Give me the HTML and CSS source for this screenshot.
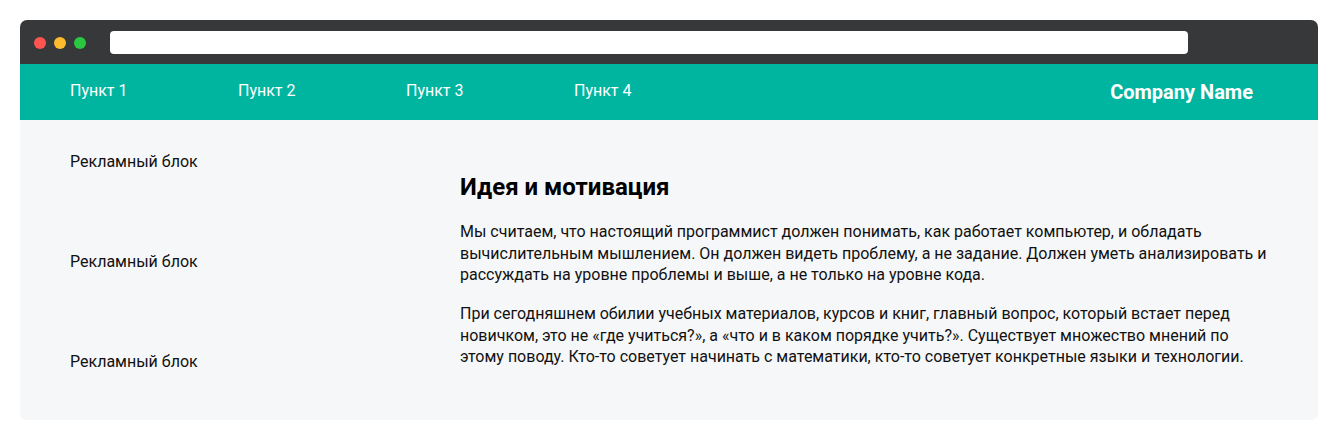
FILE: index.html
```html
<!DOCTYPE html>
<html lang="ru">
<head>
<meta charset="utf-8">
<title>Идея и мотивация</title>
<link rel="stylesheet" href="styles.css">
</head>
<body>
<div class="window">
  <div class="titlebar">
    <div class="dots">
      <span class="dot dot-red"></span>
      <span class="dot dot-yellow"></span>
      <span class="dot dot-green"></span>
    </div>
    <div class="urlbar"></div>
  </div>
  <header class="nav">
    <ul class="menu">
      <li>Пункт 1</li>
      <li>Пункт 2</li>
      <li>Пункт 3</li>
      <li>Пункт 4</li>
    </ul>
    <div class="brand">Company Name</div>
  </header>
  <main class="content">
    <aside class="ads">
      <div class="ad">Рекламный блок</div>
      <div class="ad">Рекламный блок</div>
      <div class="ad">Рекламный блок</div>
    </aside>
    <article class="article">
      <h1 class="title">Идея и мотивация</h1>
      <p class="text">Мы считаем, что настоящий программист должен понимать, как работает компьютер, и обладать вычислительным мышлением. Он должен видеть проблему, а не задание. Должен уметь анализировать и рассуждать на уровне проблемы и выше, а не только на уровне кода.</p>
      <p class="text">При сегодняшнем обилии учебных материалов, курсов и книг, главный вопрос, который встает перед новичком, это не «где учиться?», а «что и в каком порядке учить?». Существует множество мнений по этому поводу. Кто-то советует начинать с математики, кто-то советует конкретные языки и технологии.</p>
    </article>
  </main>
</div>
</body>
</html>
```

FILE: styles.css
```css
* { box-sizing: border-box; }
html, body { margin: 0; padding: 0; background: #ffffff; }
body {
  padding: 20px;
  font-family: Roboto, "Liberation Sans", sans-serif;
}
.window {
  width: 1298px;
  border-radius: 7px;
  overflow: hidden;
  background: #f6f7f9;
}
.titlebar {
  height: 44px;
  background: #37383a;
  display: flex;
  align-items: center;
  padding: 0 0 0 14px;
}
.dots {
  display: flex;
  gap: 8px;
  margin-top: 1px;
}
.dot {
  width: 12px;
  height: 12px;
  border-radius: 50%;
  display: block;
}
.dot-red { background: #fe5551; }
.dot-yellow { background: #fdbb2e; }
.dot-green { background: #29c840; }
.urlbar {
  margin-left: 24px;
  width: 1078px;
  height: 23px;
  background: #ffffff;
  border-radius: 4px;
  margin-top: 1px;
}
.nav {
  height: 56px;
  background: #00b5a0;
  display: flex;
  align-items: center;
  justify-content: space-between;
  padding: 0 65px 0 50px;
  color: #ffffff;
}
.menu {
  list-style: none;
  margin: 0;
  padding: 0;
  display: flex;
  margin-top: -3px;
}
.menu li {
  width: 168px;
  font-size: 16px;
  line-height: 20px;
}
.brand {
  font-size: 20px;
  line-height: 24px;
  font-weight: 700;
}
.content {
  display: flex;
  padding: 30px 50px 48px 50px;
  color: #111111;
}
.ads {
  width: 390px;
  flex-shrink: 0;
  padding-top: 1px;
}
.ad {
  font-size: 16px;
  line-height: 21px;
  height: 100px;
}
.ad:last-child { height: 21px; }
.article {
  flex: 1;
}
.title {
  margin: 23px 0 20px;
  font-size: 24px;
  line-height: 28px;
  font-weight: 700;
  color: #000000;
}
.text {
  margin: 0 0 17.5px;
  font-size: 16px;
  line-height: 21.5px;
}
.text:last-child { margin-bottom: 0; }
```
